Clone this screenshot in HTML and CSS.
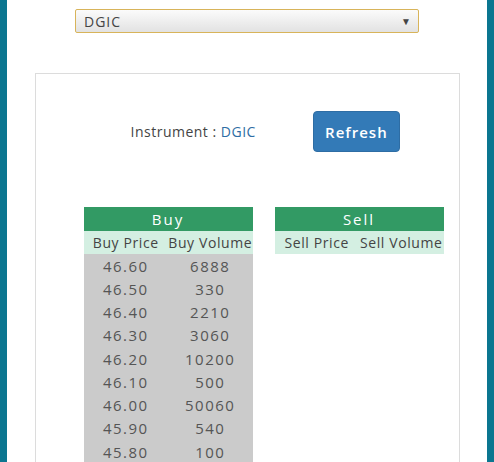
FILE: index.html
```html
<!DOCTYPE html>
<html lang="en">
<head>
  <meta charset="UTF-8">
  <title>Order Book</title>
  <link rel="stylesheet" href="styles.css">
</head>
<body>
  <div class="page">
    <div class="picker">
      <div class="select">
        <span>DGIC</span>
        <span class="arrow">&#9660;</span>
      </div>
    </div>

    <div class="card">
      <div class="toolbar">
        <div class="instrument">Instrument : <span class="code">DGIC</span></div>
        <button type="button" class="refresh">Refresh</button>
      </div>

      <div class="books">
        <table class="book">
          <tr><th colspan="2" class="side">Buy</th></tr>
          <tr class="cols"><td>Buy Price</td><td>Buy Volume</td></tr>
          <tr class="row"><td>46.60</td><td>6888</td></tr>
          <tr class="row"><td>46.50</td><td>330</td></tr>
          <tr class="row"><td>46.40</td><td>2210</td></tr>
          <tr class="row"><td>46.30</td><td>3060</td></tr>
          <tr class="row"><td>46.20</td><td>10200</td></tr>
          <tr class="row"><td>46.10</td><td>500</td></tr>
          <tr class="row"><td>46.00</td><td>50060</td></tr>
          <tr class="row"><td>45.90</td><td>540</td></tr>
          <tr class="row"><td>45.80</td><td>100</td></tr>
        </table>

        <table class="book">
          <tr><th colspan="2" class="side">Sell</th></tr>
          <tr class="cols"><td>Sell Price</td><td>Sell Volume</td></tr>
        </table>
      </div>
    </div>
  </div>
</body>
</html>
```

FILE: styles.css
```css
body {
  margin: 0;
  background-color: #0b7690;
  font-family: 'Open Sans', sans-serif;
  color: #4a4a4a;
}
.page {
  margin: 0 7px;
  background-color: #fff;
  min-height: 462px;
  overflow: hidden;
}
.picker {
  display: flex;
  justify-content: center;
  padding-top: 9px;
}
.select {
  width: 344px;
  height: 24px;
  box-sizing: border-box;
  border: 1px solid #d8b45a;
  border-radius: 2px;
  background: linear-gradient(#fbfbfb, #e2e2e2);
  display: flex;
  align-items: center;
  justify-content: space-between;
  padding: 0 6px 0 8px;
  font-size: 14px;
  letter-spacing: 1px;
  color: #444;
}
.arrow {
  font-size: 10px;
  color: #444;
}
.card {
  width: 425px;
  box-sizing: border-box;
  margin: 40px auto 0;
  border: 1px solid #dcdcdc;
  border-bottom: none;
  min-height: 400px;
  padding: 37px 0 0 48px;
}
.toolbar {
  display: flex;
  align-items: center;
  gap: 57px;
  padding-left: 47px;
}
.instrument {
  font-size: 14px;
  letter-spacing: 0.5px;
  color: #444;
}
.code {
  color: #2e6da4;
}
.refresh {
  width: 87px;
  height: 41px;
  border: 1px solid #2e6da4;
  border-radius: 4px;
  background-color: #337ab7;
  color: #fff;
  font-family: 'Open Sans', sans-serif;
  font-size: 15px;
  font-weight: 600;
  letter-spacing: 1px;
  cursor: pointer;
}
.books {
  display: flex;
  gap: 22px;
  margin-top: 55px;
}
.book {
  width: 169px;
  border-collapse: collapse;
  table-layout: fixed;
  align-self: flex-start;
}
.book td, .book th {
  padding: 0;
  text-align: center;
  white-space: nowrap;
}
.side {
  height: 24px;
  background-color: #329a64;
  color: #fff;
  font-weight: normal;
  font-size: 15px;
  letter-spacing: 2px;
}
.cols td {
  height: 23px;
  background-color: #d4efe2;
  font-size: 14px;
  letter-spacing: 0.6px;
  color: #444;
}
.row td {
  height: 23.25px;
  background-color: #cbcbcb;
  font-size: 15px;
  letter-spacing: 1.5px;
  color: #555;
}
```
